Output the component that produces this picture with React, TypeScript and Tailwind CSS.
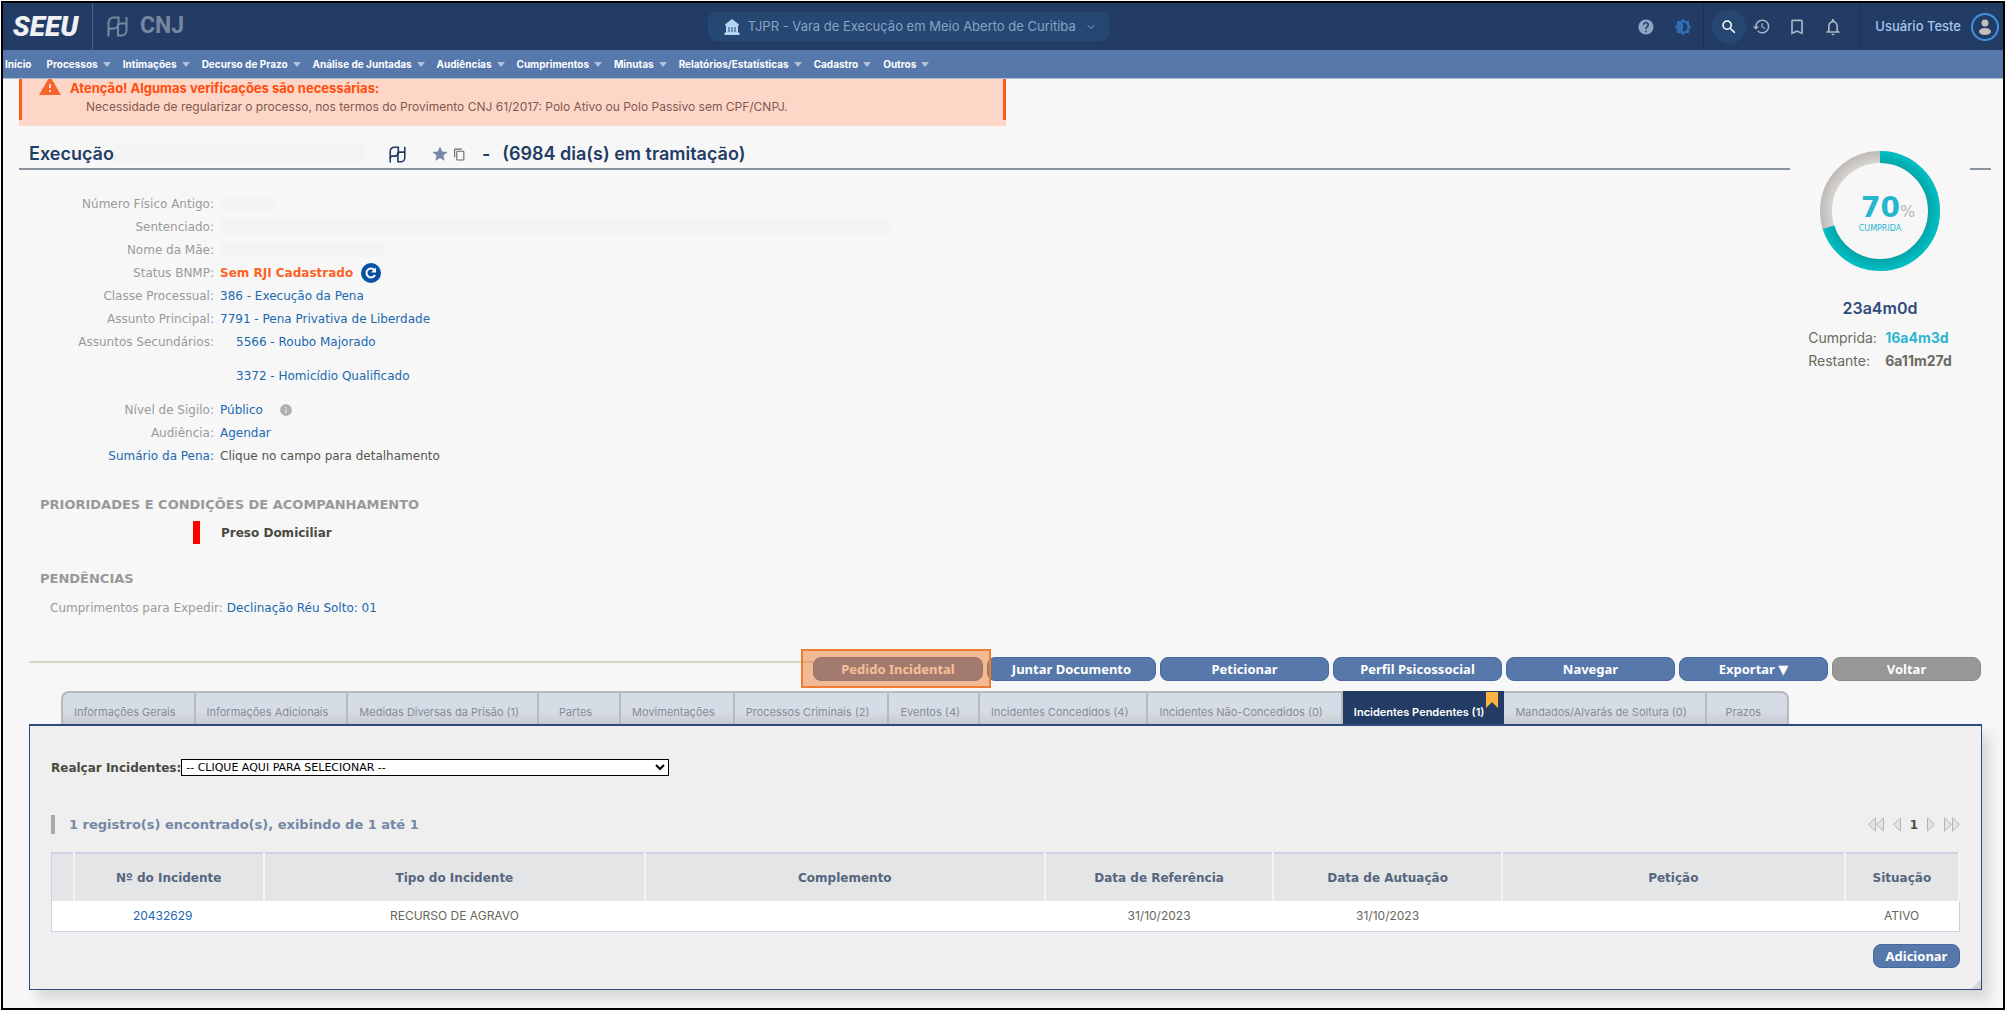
import React, { useState } from "react";
import {
  MdBookmarkBorder,
  MdBrightness6,
  MdContentCopy,
  MdHelp,
  MdHistory,
  MdInfo,
  MdNotificationsNone,
  MdSearch,
  MdStar,
  MdWarning,
} from "react-icons/md";
import { FiChevronDown } from "react-icons/fi";

const menuItems = [
  "Processos",
  "Intimações",
  "Decurso de Prazo",
  "Análise de Juntadas",
  "Audiências",
  "Cumprimentos",
  "Minutas",
  "Relatórios/Estatísticas",
  "Cadastro",
  "Outros",
];

const tabs = [
  "Informações Gerais",
  "Informações Adicionais",
  "Medidas Diversas da Prisão (1)",
  "Partes",
  "Movimentações",
  "Processos Criminais (2)",
  "Eventos (4)",
  "Incidentes Concedidos (4)",
  "Incidentes Não-Concedidos (0)",
  "Incidentes Pendentes (1)",
  "Mandados/Alvarás de Soltura (0)",
  "Prazos",
];

const columns = [
  { title: "", width: "w-[22px]" },
  { title: "Nº do Incidente", width: "w-[10%]" },
  { title: "Tipo do Incidente", width: "w-[20%]" },
  { title: "Complemento", width: "w-[21%]" },
  { title: "Data de Referência", width: "w-[12%]" },
  { title: "Data de Autuação", width: "w-[12%]" },
  { title: "Petição", width: "w-[18%]" },
  { title: "Situação", width: "w-[6%]" },
];

const incidents = [
  {
    id: "20432629",
    type: "RECURSO DE AGRAVO",
    complement: "",
    reference: "31/10/2023",
    filed: "31/10/2023",
    petition: "",
    status: "ATIVO",
  },
];

function PjIcon({ className }: { className: string }) {
  return (
    <svg viewBox="0 0 21 21" fill="none" stroke="currentColor" strokeWidth="2" className={className}>
      <path d="M1.500 20.500V6.500a5 5 0 0 1 5-5h5v6" />
      <path d="M1.500 15a2.500 2.500 0 0 1 2.500-2.500h3a4 4 0 0 0 4-4V7.500" />
      <path d="M19.500 1v13.500a5 5 0 0 1-5 5H11v-4" />
      <path d="M11 16V10a2.500 2.500 0 0 1 2.500-2.500h6" />
    </svg>
  );
}

function BankIcon() {
  return (
    <svg viewBox="0 0 16 16" fill="currentColor" className="size-4 text-[#b5d3f3]">
      <path d="M8 0 15 5.500v1H1v-1z" />
      <path d="M2 6h12v8H2z" />
      <path d="M.5 13.500h15V16H.5z" />
      <path d="M5 8v5M8 8v5M11 8v5" stroke="#264772" strokeWidth="1" />
    </svg>
  );
}

function Gauge({ percent }: { percent: number }) {
  const length = 2 * Math.PI * 54;
  return (
    <div className="relative size-[120px]">
      <svg viewBox="0 0 120 120" className="size-full">
        <defs>
          <radialGradient id="done" gradientUnits="userSpaceOnUse" cx="60" cy="60" r="60">
            <stop offset=".8" stopColor="#06a5a9" />
            <stop offset="1" stopColor="#00c0c4" />
          </radialGradient>
          <radialGradient id="rest" gradientUnits="userSpaceOnUse" cx="60" cy="60" r="60">
            <stop offset=".8" stopColor="#d6d4d2" />
            <stop offset="1" stopColor="#bfbab6" />
          </radialGradient>
        </defs>
        <g transform="rotate(-90 60 60)" fill="none" strokeWidth="12">
          <circle cx="60" cy="60" r="54" stroke="url(#rest)" />
          <circle
            cx="60"
            cy="60"
            r="54"
            stroke="url(#done)"
            strokeDasharray={`${(length * percent) / 100} ${length}`}
          />
        </g>
      </svg>
      <div className="absolute inset-x-0 top-10 flex flex-col items-center font-['DejaVu_Sans',sans-serif]">
        <p className="flex items-baseline pl-4 text-[28px] leading-[34px] font-bold text-[#25b5cf]">
          {percent}
          <span className="text-base font-normal text-[#b5b5b5]">%</span>
        </p>
        <p className="text-[8px] leading-2 text-[#25b5cf]">CUMPRIDA</p>
      </div>
    </div>
  );
}

function Field({ label, link, children }: { label: string; link?: boolean; children?: React.ReactNode }) {
  return (
    <div className="flex h-[23px] items-center gap-[6px]">
      <dt className="w-[195px] text-right text-[#9a9a9a]">
        {link ? <a href="#sumario" className="text-[#2069b0]">{label}</a> : label}
      </dt>
      <dd className="flex items-center text-[#2069b0]">{children}</dd>
    </div>
  );
}

function ActionButton({ label, size, gray }: { label: string; size: string; gray?: boolean }) {
  return (
    <button
      className={`h-6 rounded-lg border text-[13px] leading-5 font-bold text-white ${size} ${
        gray ? "border-[#8a8a8a] bg-[#979797]" : "border-[#466a9f] bg-[#5678ab]"
      }`}
    >
      {label}
    </button>
  );
}

function PagerArrow({ label, double, flip }: { label: string; double?: boolean; flip?: boolean }) {
  return (
    <button aria-label={label} className={flip ? "rotate-180" : ""}>
      <svg
        viewBox={double ? "0 0 17 15" : "0 0 9 15"}
        fill="#e4e4e4"
        stroke="#b4b4b4"
        className={double ? "h-[15px] w-[17px]" : "h-[15px] w-[9px]"}
      >
        <path d="M7.500 1v13l-7-6.500z" />
        {double && <path d="M15.500 1v13l-7-6.500z" />}
      </svg>
    </button>
  );
}

function TopBar() {
  return (
    <header className="flex h-[47px] items-center bg-[#223c65] text-[#a9b4c5]">
      <div className="flex h-full w-[90px] items-center justify-center border-r border-[#4a6287] pr-1 font-[Roboto,sans-serif] text-[28px] font-black text-[#eef0f2] italic">
        SEEU
      </div>
      <PjIcon className="ml-[14px] size-[21px] text-[#76879f]" />
      <span className="ml-3 font-[Roboto,sans-serif] text-[23px] font-bold text-[#76879f]">CNJ</span>

      <div className="flex flex-1 justify-center">
        <label className="mr-[5px] flex h-[29px] items-center gap-2 rounded-lg bg-[#264772] pr-3 pl-4 text-[#86a3c6]">
          <BankIcon />
          <select aria-label="Vara" className="appearance-none text-[13px] outline-none">
            <option>TJPR - Vara de Execução em Meio Aberto de Curitiba</option>
          </select>
          <FiChevronDown className="size-3" />
        </label>
      </div>

      <button aria-label="Ajuda" className="mr-[19px] text-[#8fa5c4]">
        <MdHelp className="size-[18px]" />
      </button>
      <button aria-label="Tema" className="mr-[11px] text-[#2f6eb5]">
        <MdBrightness6 className="size-[18px]" />
      </button>
      <div className="flex h-full items-center border-x border-[#1a3157] pr-4 pl-2">
        <button aria-label="Pesquisar" className="mr-[6px] flex size-[34px] items-center justify-center rounded-full bg-[#264772] text-white">
          <MdSearch className="size-[18px]" />
        </button>
        <button aria-label="Histórico" className="mr-4">
          <MdHistory className="size-[19px]" />
        </button>
        <button aria-label="Favoritos" className="mr-4">
          <MdBookmarkBorder className="size-5" />
        </button>
        <button aria-label="Notificações">
          <MdNotificationsNone className="size-5" />
        </button>
      </div>
      <button className="flex items-center gap-[10px] pr-1 pl-[15px] text-[13px] font-medium text-[#a3c6ee]">
        Usuário Teste
        <svg viewBox="0 0 28 28" className="size-7">
          <circle cx="14" cy="14" r="13" fill="#223c65" stroke="#3f92df" strokeWidth="2" />
          <circle cx="14" cy="10" r="3.5" fill="#c3bfbc" />
          <ellipse cx="14" cy="18.5" rx="6" ry="3.5" fill="#c3bfbc" />
        </svg>
      </button>
    </header>
  );
}

function MenuBar() {
  return (
    <nav className="flex h-[29px] items-center gap-3 border-b border-[#a9bbd5] bg-[#5678ab] pl-[2px] text-[10px] font-bold text-white">
      <a href="#inicio" className="mr-[3px]">Início</a>
      {menuItems.map((item) => (
        <a key={item} href="#menu" className="flex items-center gap-[5px]">
          {item}
          <svg viewBox="0 0 8 5" className="h-[5px] w-2" fill="#b3c1d8">
            <path d="M0 0h8L4 5z" />
          </svg>
        </a>
      ))}
    </nav>
  );
}

function ProcessDetails() {
  return (
    <div className="text-xs font-['DejaVu_Sans',sans-serif]">
      <dl className="pt-[22px]">
        <Field label="Número Físico Antigo:">
          <span className="h-4 w-[54px] bg-[#f4f4f4]" />
        </Field>
        <Field label="Sentenciado:">
          <span className="h-[18px] w-[670px] bg-[#f4f4f4]" />
        </Field>
        <Field label="Nome da Mãe:">
          <span className="h-[14px] w-[165px] bg-[#f4f4f4]" />
        </Field>
        <Field label="Status BNMP:">
          <strong className="text-[#fb6326]">Sem RJI Cadastrado</strong>
          <button aria-label="Atualizar" className="ml-2">
            <svg viewBox="0 0 20 20" className="size-5" fill="none">
              <circle cx="10" cy="10" r="10" fill="#0a50a1" />
              <path d="M14 12a4.500 4.500 0 1 1-.6-5" stroke="#fff" strokeWidth="2" />
              <path d="M15 4.500v5h-5z" fill="#fff" />
            </svg>
          </button>
        </Field>
        <Field label="Classe Processual:">
          <a href="#classe">386 - Execução da Pena</a>
        </Field>
        <Field label="Assunto Principal:">
          <a href="#assunto">7791 - Pena Privativa de Liberdade</a>
        </Field>
        <Field label="Assuntos Secundários:">
          <a href="#assunto" className="ml-4">5566 - Roubo Majorado</a>
        </Field>
        <div className="flex h-[45px] items-center pl-[217px]">
          <dd>
            <a href="#assunto" className="text-[#2069b0]">3372 - Homicídio Qualificado</a>
          </dd>
        </div>
        <Field label="Nível de Sigilo:">
          <a href="#sigilo">Público</a>
          <MdInfo className="ml-4 size-[14px] text-[#b0b0b0]" />
        </Field>
        <Field label="Audiência:">
          <a href="#audiencia">Agendar</a>
        </Field>
        <Field label="Sumário da Pena:" link>
          <span className="text-[#55554c]">Clique no campo para detalhamento</span>
        </Field>
      </dl>

      <h2 className="mt-7 pl-[21px] text-[13px] leading-5 font-bold text-[#999]">
        PRIORIDADES E CONDIÇÕES DE ACOMPANHAMENTO
      </h2>
      <p className="mt-[6px] flex h-[23px] items-center gap-[21px] pl-[174px] font-bold text-[#4a4a40]">
        <span className="h-full w-[7px] bg-[#ff0000]" />
        Preso Domiciliar
      </p>

      <h2 className="mt-[25px] pl-[21px] text-[13px] leading-5 font-bold text-[#999]">PENDÊNCIAS</h2>
      <p className="mt-[7px] flex h-[23px] items-center gap-1 pl-[31px] text-[#9a9a9a]">
        Cumprimentos para Expedir:
        <a href="#pendencias" className="text-[#2069b0]">Declinação Réu Solto: 01</a>
      </p>
    </div>
  );
}

export default function App() {
  const [activeTab, setActiveTab] = useState("Incidentes Pendentes (1)");

  return (
    <div className="min-h-screen bg-white p-px font-[Inter,sans-serif]">
      <div className="min-h-[calc(100vh-2px)] overflow-hidden border-2 border-black bg-[#f7f7f7]">
        <TopBar />
        <MenuBar />

        <main className="pr-3 pl-4">
          <section className="w-[987px] max-w-full overflow-hidden bg-[#fed6c8] pb-[6px]">
            <div className="flex h-[41px] gap-2 border-x-[3px] border-[#ff5a1a] pl-[16px]">
              <MdWarning className="-mt-[5px] size-6 text-[#f4662c]" />
              <div>
                <h2 className="text-[13px] leading-[18px] font-bold text-[#ff4e0e]">
                  Atenção! Algumas verificações são necessárias:
                </h2>
                <p className="pl-4 text-xs leading-[19px] text-[#81594d]">
                  Necessidade de regularizar o processo, nos termos do Provimento CNJ 61/2017: Polo Ativo ou Polo Passivo sem CPF/CNPJ.
                </p>
              </div>
            </div>
          </section>

          <div className="flex">
            <div className="flex-1">
              <div className="flex h-11 items-center border-b-2 border-[#8b939d] pt-[14px] pl-[10px] text-lg font-semibold text-[#223c65]">
                <h1>Execução</h1>
                <span className="h-5 w-[251px] bg-[#f4f4f4]" />
                <PjIcon className="ml-[24px] size-[17px]" />
                <MdStar className="ml-[25px] size-[18px] text-[#7688a5]" />
                <button aria-label="Copiar" className="ml-1">
                  <MdContentCopy className="size-[13px] text-[#666]" />
                </button>
                <span className="ml-4">-</span>
                <span className="ml-3">(6984 dia(s) em tramitação)</span>
              </div>
              <ProcessDetails />
            </div>

            <aside className="flex w-[180px] flex-col items-center pt-[25px] text-[#6b6a60]">
              <Gauge percent={70} />
              <p className="mt-[27px] text-base leading-5 font-semibold text-[#2f4b7b]">23a4m0d</p>
              <dl className="mt-2 grid grid-cols-[77px_auto] text-sm leading-[23px]">
                <dt>Cumprida:</dt>
                <dd className="font-bold text-[#2ab7cf]">16a4m3d</dd>
                <dt>Restante:</dt>
                <dd className="font-bold">6a11m27d</dd>
              </dl>
            </aside>
            <div className="h-11 w-[21px] border-b-2 border-[#8b939d]" />
          </div>

          <div className="mt-[38px] mr-[10px] ml-[10px] flex gap-1 font-['Noto_Sans','DejaVu_Sans',sans-serif]">
            <div className="mt-1 -mr-1 h-[2px] flex-1 bg-[#d9d4c0]" />
            <div className="relative flex">
              <ActionButton label="Pedido Incidental" size="w-[170px]" />
              <span className="pointer-events-none absolute -top-2 -right-2 -bottom-[7px] -left-3 border-2 border-[#ee7d31] bg-[#ee7d31]/50" />
            </div>
            <ActionButton label="Juntar Documento" size="w-[169px]" />
            <ActionButton label="Peticionar" size="w-[169px]" />
            <ActionButton label="Perfil Psicossocial" size="w-[169px]" />
            <ActionButton label="Navegar" size="w-[169px]" />
            <ActionButton label="Exportar ▼" size="w-[149px]" />
            <ActionButton label="Voltar" size="w-[149px]" gray />
          </div>

          <div role="tablist" className="mt-[10px] ml-[42px] flex h-[33px]">
            {tabs.map((tab) => (
              <button
                key={tab}
                role="tab"
                aria-selected={tab === activeTab}
                onClick={() => setActiveTab(tab)}
                className={`relative min-w-[82px] border-t-2 border-r-2 pt-2 pr-[18px] pl-[11px] text-[11px] whitespace-nowrap first:rounded-tl-lg first:border-l-2 last:rounded-tr-lg ${
                  tab === activeTab
                    ? "border-[#223c65] bg-[#223c65] font-semibold text-white"
                    : "border-[#b6b9be] bg-linear-to-b from-[#d6dce5] from-60% to-[#c6cad3] text-[#858c98]"
                }`}
              >
                {tab}
                {tab === activeTab && (
                  <svg viewBox="0 0 12 16" className="absolute -top-px right-1 h-4 w-3" fill="#fdb23f">
                    <path d="M0 0h12v16l-6-6-6 6z" />
                  </svg>
                )}
              </button>
            ))}
          </div>

          <section className="relative mr-[9px] ml-[10px] border border-t-2 border-[#2d4a78] bg-[#efefef] px-[21px] pt-[33px] pb-[21px] font-['DejaVu_Sans',sans-serif] text-xs shadow-[8px_10px_12px_rgba(0,0,0,0.12)]">
            <div className="flex h-[17px] items-center">
              <label htmlFor="realcar" className="font-bold text-[#4a4a40]">
                Realçar Incidentes:
              </label>
              <select id="realcar" className="h-[17px] w-[488px] border border-black bg-white text-[11px] text-black">
                <option>-- CLIQUE AQUI PARA SELECIONAR --</option>
              </select>
            </div>

            <div className="mt-[39px] flex h-[19px] items-center justify-between">
              <p className="border-l-4 border-[#a9abad] pl-[14px] text-[13px] leading-[19px] font-bold text-[#7588a5]">
                1 registro(s) encontrado(s), exibindo de 1 até 1
              </p>
              <div className="flex items-center gap-2">
                <PagerArrow label="Primeira" double />
                <PagerArrow label="Anterior" />
                <strong className="text-[#4a4a40]">1</strong>
                <PagerArrow label="Próxima" flip />
                <PagerArrow label="Última" double flip />
              </div>
            </div>

            <table className="mt-[18px] w-full table-fixed border border-[#cfd0e4] text-center">
              <thead>
                <tr className="h-12 border-t-2 border-[#cfd0e4] bg-[#e3e5e7] text-[#56657e]">
                  {columns.map((column) => (
                    <th key={column.title} className={`border-r-2 border-r-[#f4f4f4] font-bold ${column.width}`}>
                      {column.title}
                    </th>
                  ))}
                </tr>
              </thead>
              <tbody>
                {incidents.map((incident) => (
                  <tr key={incident.id} className="h-[30px] bg-white font-[Inter,sans-serif] text-[#66665c]">
                    <td />
                    <td className="pr-3">
                      <a href="#incidente" className="text-[#2069b0]">{incident.id}</a>
                    </td>
                    <td>{incident.type}</td>
                    <td>{incident.complement}</td>
                    <td>{incident.reference}</td>
                    <td>{incident.filed}</td>
                    <td>{incident.petition}</td>
                    <td>{incident.status}</td>
                  </tr>
                ))}
              </tbody>
            </table>

            <div className="mt-3 flex justify-end font-['Noto_Sans','DejaVu_Sans',sans-serif]">
              <ActionButton label="Adicionar" size="w-[87px]" />
            </div>
            <span className="absolute right-0 bottom-0 size-[9px] bg-linear-to-br from-transparent from-50% to-[#d5d5d5] to-50%" />
          </section>
        </main>
      </div>
    </div>
  );
}
